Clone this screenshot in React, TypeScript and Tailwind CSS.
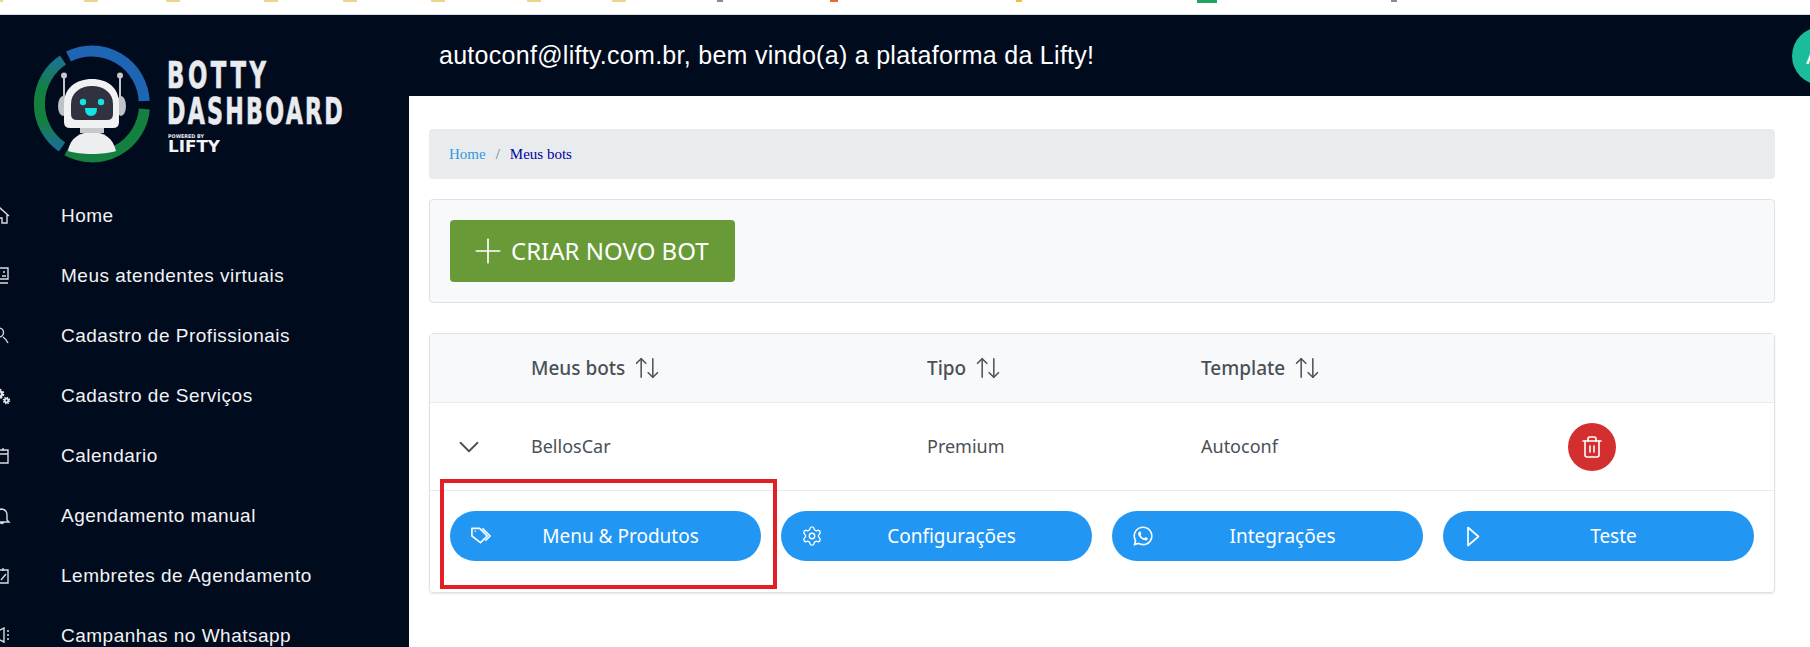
import React from 'react';
import { ArrowDownUp, ChevronDown, Plus, Settings, Trash2 } from 'lucide-react';
import { FaWhatsapp } from 'react-icons/fa';

const sans = "font-['Liberation_Sans',Arial,sans-serif]";
const ui = "font-['Noto_Sans',sans-serif]";

const BookmarkStrip = () => (
  <div className="flex h-[15px] shrink-0 items-start border-b border-[#d5dde3] bg-white">
    <span className="h-[2px] w-[3px] bg-[#ecd68c]" />
    <span className="ml-[81px] h-[2px] w-[14px] bg-[#ecd68c]" />
    <span className="ml-[68px] h-[2px] w-[14px] bg-[#ecd68c]" />
    <span className="ml-[84px] h-[2px] w-[14px] bg-[#ecd68c]" />
    <span className="ml-[65px] h-[2px] w-[14px] bg-[#ecd68c]" />
    <span className="ml-[74px] h-[2px] w-[14px] bg-[#ecd68c]" />
    <span className="ml-[82px] h-[2px] w-[14px] bg-[#ecd68c]" />
    <span className="ml-[71px] h-[2px] w-[14px] bg-[#ecd68c]" />
    <span className="ml-[91px] h-[2px] w-[6px] bg-[#8b8b8b]" />
    <span className="ml-[107px] h-[2px] w-[8px] bg-[#f0683a]" />
    <span className="ml-[178px] h-[2px] w-[6px] bg-[#f5b942]" />
    <span className="ml-[175px] h-[3px] w-[20px] bg-[#1fa463]" />
    <span className="ml-[174px] h-[2px] w-[6px] bg-[#8b8b8b]" />
  </div>
);

const Logo = () => (
  <svg width="340" height="140" viewBox="20 30 340 140" className="ml-[20px] block">
    <defs>
      <linearGradient id="leftArc" x1="0" y1="0" x2="0" y2="1">
        <stop offset="0" stopColor="#1b7390" />
        <stop offset="0.35" stopColor="#13803f" />
        <stop offset="0.7" stopColor="#14803f" />
        <stop offset="1" stopColor="#1a6f95" />
      </linearGradient>
    </defs>
    <g fill="none" strokeWidth="11">
      <path d="M68.5 56.5 A52.5 52.5 0 0 1 144.2 101" stroke="#1e66b4" />
      <path d="M144.4 109 A52.5 52.5 0 0 1 67 150.5" stroke="#13803f" />
      <path d="M62 147 A52.5 52.5 0 0 1 63 60" stroke="url(#leftArc)" />
    </g>
    <path d="M64 76 V100 M120 76 V100" stroke="#c4c7cc" strokeWidth="2" />
    <circle cx="64" cy="75.5" r="3" fill="#c4c7cc" />
    <circle cx="120" cy="75.5" r="3" fill="#c4c7cc" />
    <ellipse cx="63" cy="106" rx="5" ry="10" fill="#bfc2c7" />
    <ellipse cx="121" cy="106" rx="5" ry="10" fill="#bfc2c7" />
    <path d="M68 151 C70 138 80 132 92 132 C104 132 113 138 116 151 C104 155 80 155 68 151Z" fill="#eceef0" />
    <rect x="80" y="126" width="24" height="7" fill="#c6c8cc" />
    <path d="M64 104 C64 88 76 79 92 79 C108 79 119 88 119 104 V122 Q119 128 113 128 H70 Q64 128 64 122Z" fill="#f0f1f3" />
    <path d="M71 104 C71 93 80 86 92 86 C104 86 113 93 113 104 V114 Q113 120 107 120 H77 Q71 120 71 114Z" fill="#30323f" />
    <circle cx="83" cy="102" r="3.2" fill="#14e3e3" />
    <circle cx="101" cy="102" r="3.2" fill="#14e3e3" />
    <path d="M85 108 H97 Q97 116 91 116 Q85 116 85 108Z" fill="#14e3e3" />
    <g fill="#e9ebee" fontFamily="'DejaVu Sans', sans-serif" fontWeight="700">
      <text transform="translate(167 88) scale(0.6 1)" fontSize="38" textLength="165" lengthAdjust="spacing" stroke="#e9ebee" strokeWidth="0.7">BOTTY</text>
      <text transform="translate(167 124) scale(0.6 1)" fontSize="37" textLength="293" lengthAdjust="spacing" stroke="#e9ebee" strokeWidth="0.7">DASHBOARD</text>
      <text x="168" y="138" fontSize="5" textLength="36" lengthAdjust="spacingAndGlyphs">POWERED BY</text>
      <text x="168" y="152" fontSize="16" textLength="52" lengthAdjust="spacingAndGlyphs" fill="#f2f3f5">LIFTY</text>
    </g>
  </svg>
);

const stroke = { fill: 'none', stroke: '#d8dbe0', strokeWidth: 1.4 };

const navItems: { label: string; icon: React.ReactNode }[] = [
  {
    label: 'Home',
    icon: <path {...stroke} d="M-8 8 L0 0 L9 8 M7 7 V15 H2 V10 H-3 V15 H-6" />,
  },
  {
    label: 'Meus atendentes virtuais',
    icon: <path {...stroke} d="M-6 0 H8 V11 H-6 M3 4 H5 M2 8 H6 M-6 15 H8" />,
  },
  {
    label: 'Cadastro de Profissionais',
    icon: <path {...stroke} d="M-1 0 A4.5 4.5 0 1 1 -1 9 M3 9 Q6 11 8 15" />,
  },
  {
    label: 'Cadastro de Serviços',
    icon: (
      <g fill="none" stroke="#e6e8ec">
        <circle cx="-1" cy="6" r="3" strokeWidth="2.4" />
        <circle cx="-1" cy="6" r="4.6" strokeWidth="1.4" strokeDasharray="2 1.6" />
        <circle cx="6.5" cy="12.5" r="1.8" strokeWidth="1.8" />
        <circle cx="6.5" cy="12.5" r="3.2" strokeWidth="1.2" strokeDasharray="1.4 1.1" />
      </g>
    ),
  },
  {
    label: 'Calendario',
    icon: <path {...stroke} d="M-6 2 H8 V15 H-6 M-6 6 H8 M3 0 V3" />,
  },
  {
    label: 'Agendamento manual',
    icon: <path {...stroke} d="M-4 13 V6 Q-2 1 2 1 Q7 2 7 7 V12 L9 14 H-6 M0 14 Q2 17 4 14" />,
  },
  {
    label: 'Lembretes de Agendamento',
    icon: <path {...stroke} d="M-6 2 H8 V15 H-6 M3 0 V3 M1 12 L6 6" />,
  },
  {
    label: 'Campanhas no Whatsapp',
    icon: <path {...stroke} d="M-2 3 L4 0 V14 L-2 11 Z M7 3 H9 M7 7 H9 M7 11 H9" />,
  },
];

const Sidebar = () => (
  <aside className="flex w-[409px] shrink-0 flex-col overflow-hidden bg-[#010b1e]">
    <div className="h-[171px] shrink-0 pt-[15px]">
      <Logo />
    </div>
    <nav className={`flex shrink-0 flex-col ${sans}`}>
      {navItems.map((item) => (
        <div key={item.label} className="flex h-[60px] shrink-0 items-center">
          <svg width="12" height="18" viewBox="0 -1 12 18" className="shrink-0">
            {item.icon}
          </svg>
          <span className="ml-[49px] text-[19px] tracking-[0.5px] whitespace-nowrap text-[#f2f3f5]">{item.label}</span>
        </div>
      ))}
    </nav>
  </aside>
);

const SortHeader = ({ label, className }: { label: string; className: string }) => (
  <div className={`flex items-center ${className}`}>
    <span>{label}</span>
    <ArrowDownUp size={28} strokeWidth={1.3} className="ml-[8px] -scale-x-100 text-[#495057]" />
  </div>
);

const TagIcon = () => (
  <svg width="23" height="20" viewBox="0 0 23 20" fill="none" stroke="currentColor" strokeWidth="1.7" strokeLinejoin="round">
    <path d="M2 2 H10 L18 10 L11 17 L2 10 Z" />
    <path d="M13 2 L21 10 L16 15" />
    <circle cx="5.5" cy="5" r="0.8" fill="currentColor" stroke="none" />
  </svg>
);

const PlayIcon = () => (
  <svg width="13" height="21" viewBox="0 0 13 21" fill="none" stroke="currentColor" strokeWidth="1.7" strokeLinejoin="round" className="ml-[4px]">
    <path d="M1 1.5 L11.5 10.5 L1 19.5 Z" />
  </svg>
);

const actions = [
  { label: 'Menu & Produtos', icon: <TagIcon /> },
  { label: 'Configurações', icon: <Settings size={22} strokeWidth={1.5} /> },
  { label: 'Integrações', icon: <FaWhatsapp size={22} /> },
  { label: 'Teste', icon: <PlayIcon /> },
];

export default function App() {
  return (
    <div className="flex h-[647px] w-[1810px] flex-col overflow-hidden bg-white">
      <BookmarkStrip />
      <div className="flex min-h-0 flex-1">
        <Sidebar />
        <div className="flex min-w-0 flex-1 flex-col">
          <header className={`flex h-[81px] shrink-0 items-center justify-between bg-[#010b1e] pl-[30px] ${sans}`}>
            <span className="text-[25px] tracking-[0.28px] text-white">autoconf@lifty.com.br, bem vindo(a) a plataforma da Lifty!</span>
            <div className="-mr-[40px] flex h-[58px] w-[58px] items-center rounded-full bg-[#1abc9c] pl-[14px] text-[24px] text-white">
              A
            </div>
          </header>

          <main className={`flex flex-col px-[20px] pt-[33px] ${ui}`}>
            <div className="flex h-[50px] w-[1346px] items-center gap-[10px] rounded-[4px] bg-[#e9ecef] pl-[20px] font-['Liberation_Serif',serif] text-[15px]">
              <span className="text-[#3498db]">Home</span>
              <span className="text-[#6c757d]">/</span>
              <span className="text-[#0000a0]">Meus bots</span>
            </div>

            <div className="mt-[20px] flex h-[104px] w-[1346px] items-center rounded-[4px] border border-[#dee2e6] bg-[#f8f9fa] pl-[20px]">
              <button className="flex h-[62px] w-[285px] items-center rounded-[4px] bg-[#689b38] pl-[18px] text-[24px] text-white">
                <Plus size={40} strokeWidth={1} />
                <span className="ml-[3px]">CRIAR NOVO BOT</span>
              </button>
            </div>

            <div className="relative mt-[30px] w-[1346px] rounded-[4px] border border-[#dee2e6] shadow-[0_1px_2px_rgba(0,0,0,0.1)]">
              <div className="flex h-[69px] items-center border-b border-[#e9ecef] bg-[#f8f9fa] text-[19px] font-medium text-[#495057]">
                <SortHeader label="Meus bots" className="ml-[101px] w-[396px]" />
                <SortHeader label="Tipo" className="w-[274px]" />
                <SortHeader label="Template" className="w-[300px]" />
              </div>
              <div className="flex h-[88px] items-center border-b border-[#e9ecef] text-[18px] text-[#495057]">
                <ChevronDown size={34} strokeWidth={1.3} className="ml-[22px] w-[34px]" />
                <span className="ml-[45px] w-[396px]">BellosCar</span>
                <span className="w-[274px]">Premium</span>
                <span className="w-[367px]">Autoconf</span>
                <button className="flex h-[48px] w-[48px] items-center justify-center rounded-full bg-[#d32f2f] text-white">
                  <Trash2 size={24} strokeWidth={1.6} />
                </button>
              </div>
              <div className="flex gap-[20px] px-[20px] pt-[20px] pb-[31px]">
                {actions.map((action) => (
                  <button
                    key={action.label}
                    className="flex h-[50px] w-[311px] items-center rounded-full bg-[#2196f3] pr-[12px] pl-[20px] text-[19px] text-white"
                  >
                    <span className="flex w-[22px] shrink-0">{action.icon}</span>
                    <span className="flex-1 text-center">{action.label}</span>
                  </button>
                ))}
              </div>
              {/* red annotation box */}
              <div className="absolute top-[145px] left-[10px] h-[110px] w-[337px] border-[4px] border-[#e21f26]" />
            </div>
          </main>
        </div>
      </div>
    </div>
  );
}
